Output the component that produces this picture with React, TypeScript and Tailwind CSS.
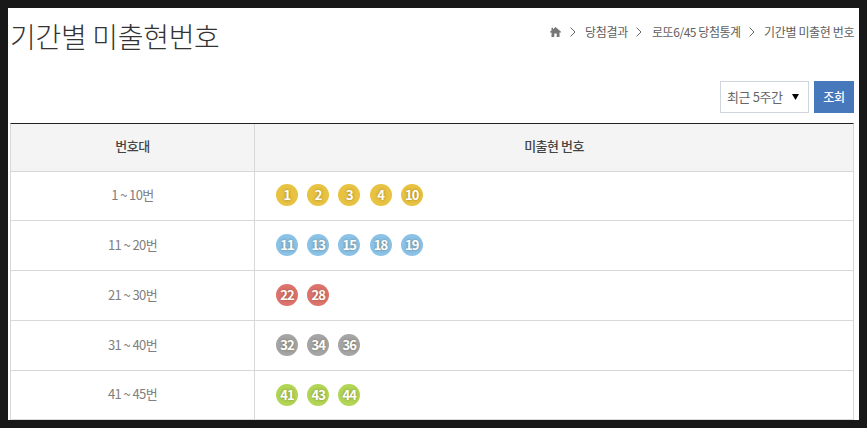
import clsx from "clsx";

type NumberRange = {
  label: string;
  numbers: number[];
  color: string;
  height: string;
};

const ranges: NumberRange[] = [
  { label: "1 ~ 10번", numbers: [1, 2, 3, 4, 10], color: "bg-[#e8c241]", height: "h-[49px]" },
  { label: "11 ~ 20번", numbers: [11, 13, 15, 18, 19], color: "bg-[#8ac2e8]", height: "h-[50px]" },
  { label: "21 ~ 30번", numbers: [22, 28], color: "bg-[#de736e]", height: "h-[50px]" },
  { label: "31 ~ 40번", numbers: [32, 34, 36], color: "bg-[#a5a5a5]", height: "h-[50px]" },
  { label: "41 ~ 45번", numbers: [41, 43, 44], color: "bg-[#b2d556]", height: "h-[49px]" },
];

const Chevron = ({ className }: { className?: string }) => (
  <svg width="6" height="10" viewBox="0 0 6 10" className={className}>
    <path d="M0.6 0.6L5 5L0.6 9.4" fill="none" stroke="#666" strokeWidth="1" />
  </svg>
);

const HomeIcon = () => (
  <svg width="11" height="10" viewBox="0 0 11 10" fill="#777">
    <path d="M5.5 0L11 4.8V5.6H9.5V10H6.7V6.6H4.3V10H1.5V5.6H0V4.8L1.5 3.5V0.8H3V2.2Z" />
  </svg>
);

const Breadcrumb = () => (
  <nav className="-mr-px flex h-[18px] items-center text-[12px] leading-[18px] whitespace-nowrap text-[#606060]">
    <HomeIcon />
    <Chevron className="ml-[9px]" />
    <span className="ml-[9px] w-[43px] tracking-[-0.3px]">당첨결과</span>
    <Chevron className="ml-[8px]" />
    <span className="ml-[10px] w-[88px] tracking-[-0.45px]">로또6/45 당첨통계</span>
    <Chevron className="ml-[9px]" />
    <span className="ml-[9px] w-[91px] tracking-[-0.35px]">기간별 미출현 번호</span>
  </nav>
);

const Ball = ({ value, color }: { value: number; color: string }) => (
  <span
    className={clsx(
      "flex size-[22px] items-center justify-center rounded-full pb-px text-[13px] leading-none font-bold tracking-[-0.9px] text-white [text-shadow:0_0_3px_rgba(73,57,0,0.5)]",
      color,
    )}
  >
    {value}
  </span>
);

const App = () => {
  return (
    <div className="h-[428px] w-[867px] overflow-hidden bg-[#181818] p-2 font-['Noto_Sans_CJK_KR',sans-serif]">
      <main className="h-[412px] w-[851px] bg-white pr-[5px] pl-[2px]">
        <header className="flex h-[73px] items-start justify-between">
          <h1 className="pt-[7px] text-[28px] leading-[42px] font-extralight tracking-[-0.3px] whitespace-nowrap text-[#333]">
            기간별 미출현번호
          </h1>
          <div className="pt-[15px]">
            <Breadcrumb />
          </div>
        </header>
        <div className="flex h-[42px] justify-end gap-[5px]">
          <button className="flex h-[32px] w-[89px] items-center justify-between border border-[#d0d5dd] pr-[9px] pl-[6px] text-[13px] tracking-[-0.4px] whitespace-nowrap text-[#666]">
            최근 5주간
            <svg width="7" height="6" viewBox="0 0 7 6">
              <path d="M0 0H7L3.5 6Z" fill="#000" />
            </svg>
          </button>
          <button className="h-[32px] w-[40px] bg-[#4778bb] text-[12px] font-medium tracking-[-0.3px] text-white">
            조회
          </button>
        </div>
        <section className="border-x border-t border-x-[#d8d8d8] border-t-[#222]">
          <div className="flex h-[48px] border-b border-[#d8d8d8] bg-[#f4f4f4] text-[13px] font-medium tracking-[-0.5px] text-[#444]">
            <div className="flex w-[244px] items-center justify-center border-r border-[#d8d8d8] pb-[3px]">
              번호대
            </div>
            <div className="flex flex-1 items-center justify-center pb-[3px]">미출현 번호</div>
          </div>
          {ranges.map((range, index) => (
            <div
              key={range.label}
              className={clsx("flex border-b border-[#d8d8d8]", range.height)}
            >
              <div className="flex w-[244px] items-center justify-center border-r border-[#d8d8d8] pb-[2px] text-[13px] tracking-[-0.6px] text-[#808080]">
                {range.label}
              </div>
              <div
                className={clsx(
                  "flex items-center gap-[9.2px] pl-[21px]",
                  index === 0 ? "pb-[2px]" : "pb-px",
                )}
              >
                {range.numbers.map((value) => (
                  <Ball key={value} value={value} color={range.color} />
                ))}
              </div>
            </div>
          ))}
        </section>
      </main>
    </div>
  );
};

export default App;
